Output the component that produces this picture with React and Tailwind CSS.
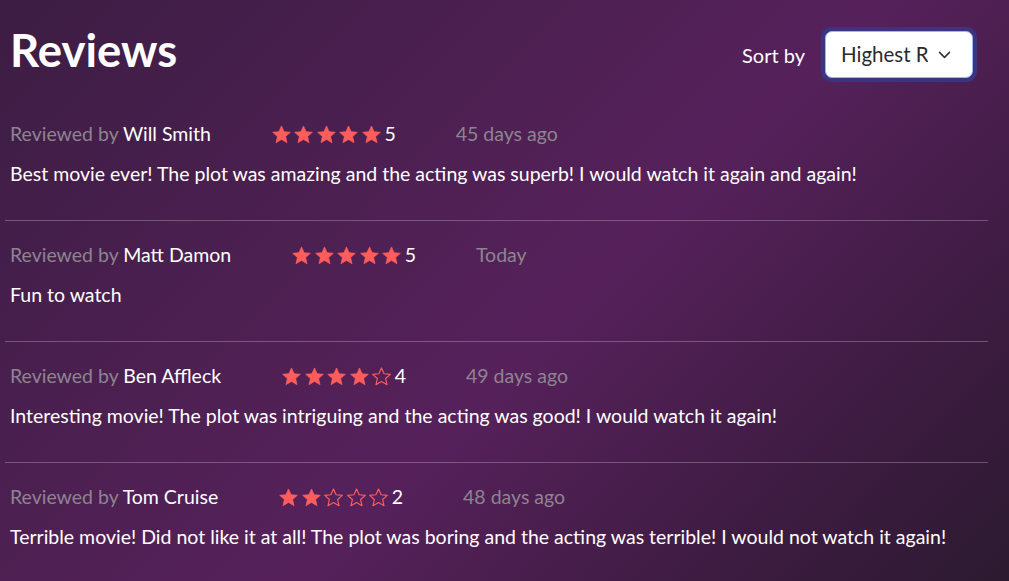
import React from "react";

const reviews = [
  {
    name: "Will Smith",
    rating: 5,
    when: "45 days ago",
    text: "Best movie ever! The plot was amazing and the acting was superb! I would watch it again and again!",
  },
  { name: "Matt Damon", rating: 5, when: "Today", text: "Fun to watch" },
  {
    name: "Ben Affleck",
    rating: 4,
    when: "49 days ago",
    text: "Interesting movie! The plot was intriguing and the acting was good! I would watch it again!",
  },
  {
    name: "Tom Cruise",
    rating: 2,
    when: "48 days ago",
    text: "Terrible movie! Did not like it at all! The plot was boring and the acting was terrible! I would not watch it again!",
  },
];

function Star({ filled }) {
  return (
    <svg viewBox="0 0 24 24" className="h-[21px] w-[21px]">
      <path
        d="M12 2.2l2.95 6.6 7.15.7-5.4 4.8 1.6 7.05L12 17.6l-6.3 3.75 1.6-7.05-5.4-4.8 7.15-.7z"
        fill={filled ? "#ff5d5b" : "none"}
        stroke="#ff5d5b"
        strokeWidth={filled ? 0.8 : 1.3}
        strokeLinejoin="round"
      />
    </svg>
  );
}

function Stars({ value }) {
  return (
    <div className="flex items-center gap-[1.5px]">
      {[1, 2, 3, 4, 5].map(i => (
        <Star key={i} filled={i <= value} />
      ))}
      <span className="ml-[1px] text-white">{value}</span>
    </div>
  );
}

function ReviewItem({ review, last }) {
  return (
    <div className={last ? "pt-[21px]" : "border-b border-white/25 pt-[21px] pb-[33px]"}>
      <div className="flex items-center gap-[60px] pl-[5px] text-[19.5px] leading-[26px]">
        <div>
          <span className="text-[#8d8490]">Reviewed by </span>
          <span className="text-white">{review.name}</span>
        </div>
        <Stars value={review.rating} />
        <span className="text-[#8d8490]">{review.when}</span>
      </div>
      <p className="mt-[14px] pl-[5px] text-[19.5px] leading-[26px] text-white">{review.text}</p>
    </div>
  );
}

export default function App() {
  return (
    <div
      className="h-[581px] w-full overflow-hidden bg-[linear-gradient(135deg,#3c1d43_0%,#4d2052_35%,#56215b_55%,#3e1c42_80%,#2c1a30_100%)] pl-[5px] pr-[21px]"
      style={{ fontFamily: "Lato, 'Open Sans', sans-serif" }}
    >
      <div className="flex items-start justify-between pt-[23px] pr-[11px]">
        <h1 className="pl-[5px] text-[45.5px] font-bold leading-[54px] text-white">Reviews</h1>
        <div className="mt-[4px] flex items-center gap-[16px]">
          <span className="text-[20px] text-white">Sort by</span>
          <div className="rounded-[10px] bg-[#3b357f] p-[4px]">
            <div className="flex h-[47px] w-[148px] items-center justify-between rounded-[7px] border border-[#9fb4f0] bg-white pl-[15px] pr-[19px]">
              <span className="w-[87px] overflow-hidden whitespace-nowrap text-[20.5px] text-[#2b2b2b]">
                Highest Rated
              </span>
              <svg viewBox="0 0 24 24" className="h-[17px] w-[17px]" fill="none" stroke="#333" strokeWidth="2.2" strokeLinecap="round" strokeLinejoin="round">
                <path d="M5 9l7 7 7-7" />
              </svg>
            </div>
          </div>
        </div>
      </div>
      <div className="mt-[18px]">
        {reviews.map((r, i) => (
          <ReviewItem key={r.name} review={r} last={i === reviews.length - 1} />
        ))}
      </div>
    </div>
  );
}
